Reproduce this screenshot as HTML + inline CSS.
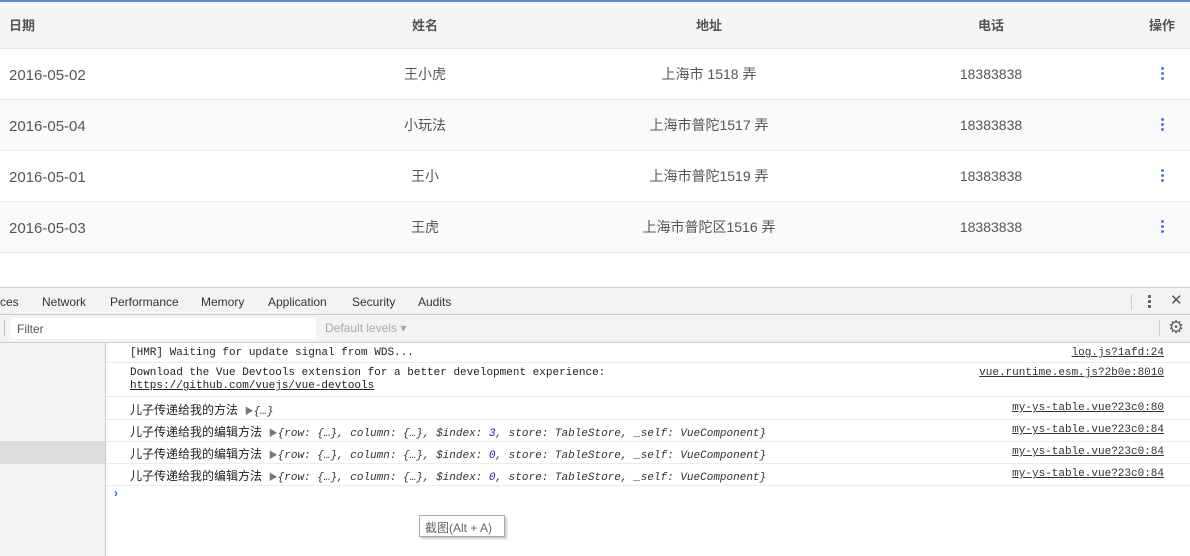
<!DOCTYPE html>
<html><head><meta charset="utf-8"><style>
*{margin:0;padding:0;box-sizing:border-box}
body{width:1190px;height:556px;overflow:hidden;background:#fff;font-family:"Liberation Sans","Noto Sans CJK SC",sans-serif;position:relative}
.abs{position:absolute}
.row{position:absolute;left:0;width:1190px;height:51px;border-bottom:1px solid #ebebeb;font-size:14px;color:#555}
.row span{position:absolute;top:16px;line-height:18px;height:18px;white-space:nowrap}
.row .d{font-size:15px;top:18px}
.c2{left:425px;transform:translateX(-50%)}
.c3{left:709px;transform:translateX(-50%)}
.c4{left:991px;transform:translateX(-50%)}
.dots{position:absolute;left:1161px;top:18px;width:3px}
.dots i{display:block;width:3px;height:3px;background:#4a7fd8;border-radius:50%;margin-bottom:2px}
.tab{position:absolute;top:295px;font-size:12px;color:#333}
.crow{position:absolute;left:106px;width:1084px;border-bottom:1px solid #ececec;font-family:"Liberation Mono","Noto Sans CJK SC",monospace;font-size:11px;color:#222}
.crow .m{position:absolute;left:24px}
.crow .src{position:absolute;right:26px;text-decoration:underline;color:#333}
.cn{font-family:"Liberation Sans","Noto Sans CJK SC",sans-serif;font-size:12px}
.it{font-style:italic;color:#333}
.n{color:#1a1aa6}
.h{position:absolute;top:17px;font-size:13px;color:#555;font-weight:bold;line-height:18px}
</style></head><body>
<div class="abs" style="left:0;top:0;width:1190px;height:49px;background:#f5f5f5;border-top:2px solid #5b8ad8;border-bottom:1px solid #e6e6e6"></div>
<div class="h" style="left:9px">日期</div>
<div class="h" style="left:425px;transform:translateX(-50%)">姓名</div>
<div class="h" style="left:709px;transform:translateX(-50%)">地址</div>
<div class="h" style="left:991px;transform:translateX(-50%)">电话</div>
<div class="h" style="left:1149px">操作</div>

<div class="row" style="top:49px"><span class="d" style="left:9px">2016-05-02</span><span class="c2">王小虎</span><span class="c3">上海市 1518 弄</span><span class="c4">18383838</span><div class="dots"><i></i><i></i><i></i></div></div>
<div class="row" style="top:100px;background:#fafafa"><span class="d" style="left:9px">2016-05-04</span><span class="c2">小玩法</span><span class="c3">上海市普陀1517 弄</span><span class="c4">18383838</span><div class="dots"><i></i><i></i><i></i></div></div>
<div class="row" style="top:151px"><span class="d" style="left:9px">2016-05-01</span><span class="c2">王小</span><span class="c3">上海市普陀1519 弄</span><span class="c4">18383838</span><div class="dots"><i></i><i></i><i></i></div></div>
<div class="row" style="top:202px;background:#fafafa"><span class="d" style="left:9px">2016-05-03</span><span class="c2">王虎</span><span class="c3">上海市普陀区1516 弄</span><span class="c4">18383838</span><div class="dots"><i></i><i></i><i></i></div></div>

<div class="abs" style="left:0;top:287px;width:1190px;height:28px;background:#f3f3f3;border-top:1px solid #ccc;border-bottom:1px solid #ccc"></div>
<div class="tab" style="left:-4px">rces</div>
<div class="tab" style="left:42px">Network</div>
<div class="tab" style="left:110px">Performance</div>
<div class="tab" style="left:201px">Memory</div>
<div class="tab" style="left:268px">Application</div>
<div class="tab" style="left:352px">Security</div>
<div class="tab" style="left:418px">Audits</div>
<div class="abs" style="left:1131px;top:294px;width:1px;height:16px;background:#ccc"></div>
<div class="abs" style="left:1148px;top:295px;width:3px"><div style="width:3px;height:3px;background:#666;margin-bottom:2px"></div><div style="width:3px;height:3px;background:#666;margin-bottom:2px"></div><div style="width:3px;height:3px;background:#666"></div></div>
<div class="abs" style="left:1170px;top:291px;font-size:15px;color:#555">✕</div>
<div class="abs" style="left:0;top:315px;width:1190px;height:27px;background:#f3f3f3"></div>
<div class="abs" style="left:4px;top:320px;width:1px;height:16px;background:#bbb"></div>
<div class="abs" style="left:11px;top:318px;width:305px;height:21px;background:#fff"></div>
<div class="abs" style="left:17px;top:322px;font-size:12px;color:#555">Filter</div>
<div class="abs" style="left:325px;top:321px;font-size:12px;color:#aaa">Default levels ▾</div>
<div class="abs" style="left:1159px;top:320px;width:1px;height:16px;background:#ccc"></div>
<div class="abs" style="left:1168px;top:317px;font-size:18px;color:#666">⚙</div>
<div class="abs" style="left:0;top:342px;width:1190px;height:1px;background:#ccc"></div>
<div class="abs" style="left:0;top:343px;width:106px;height:213px;background:#f3f3f3;border-right:1px solid #ccc"></div>
<div class="abs" style="left:0;top:441px;width:105px;height:23px;background:#ddd"></div>

<div class="crow" style="top:343px;height:20px"><span class="m" style="top:4px">[HMR] Waiting for update signal from WDS...</span><span class="src" style="top:4px">log.js?1afd:24</span></div>
<div class="crow" style="top:363px;height:34px"><span class="m" style="top:4px;line-height:13px">Download the Vue Devtools extension for a better development experience:<br><u>https://github.com/vuejs/vue-devtools</u></span><span class="src" style="top:4px">vue.runtime.esm.js?2b0e:8010</span></div>
<div class="crow" style="top:397px;height:23px"><span class="m" style="top:4px"><span class="cn">儿子传递给我的方法</span> <span style="color:#777;font-size:9px">▶</span><span class="it">{…}</span></span><span class="src" style="top:5px">my-ys-table.vue?23c0:80</span></div>
<div class="crow" style="top:420px;height:22px"><span class="m" style="top:3px"><span class="cn">儿子传递给我的编辑方法</span> <span style="color:#777;font-size:9px">▶</span><span class="it">{row: {…}, column: {…}, $index: <span class="n">3</span>, store: TableStore, _self: VueComponent}</span></span><span class="src" style="top:4px">my-ys-table.vue?23c0:84</span></div>
<div class="crow" style="top:442px;height:22px"><span class="m" style="top:3px"><span class="cn">儿子传递给我的编辑方法</span> <span style="color:#777;font-size:9px">▶</span><span class="it">{row: {…}, column: {…}, $index: <span class="n">0</span>, store: TableStore, _self: VueComponent}</span></span><span class="src" style="top:4px">my-ys-table.vue?23c0:84</span></div>
<div class="crow" style="top:464px;height:22px"><span class="m" style="top:3px"><span class="cn">儿子传递给我的编辑方法</span> <span style="color:#777;font-size:9px">▶</span><span class="it">{row: {…}, column: {…}, $index: <span class="n">0</span>, store: TableStore, _self: VueComponent}</span></span><span class="src" style="top:4px">my-ys-table.vue?23c0:84</span></div>
<div class="abs" style="left:114px;top:486px;font-size:12px;color:#2a6fd6;font-weight:bold">›</div>
<div class="abs" style="left:419px;top:515px;width:86px;height:22px;border:1px solid #aaa;background:#fff;box-shadow:2px 2px 2px #ccc;font-size:12px;color:#666;padding:3px 0 0 5px;font-family:'Liberation Sans','Noto Sans CJK SC',sans-serif">截图(Alt + A)</div>
</body></html>
